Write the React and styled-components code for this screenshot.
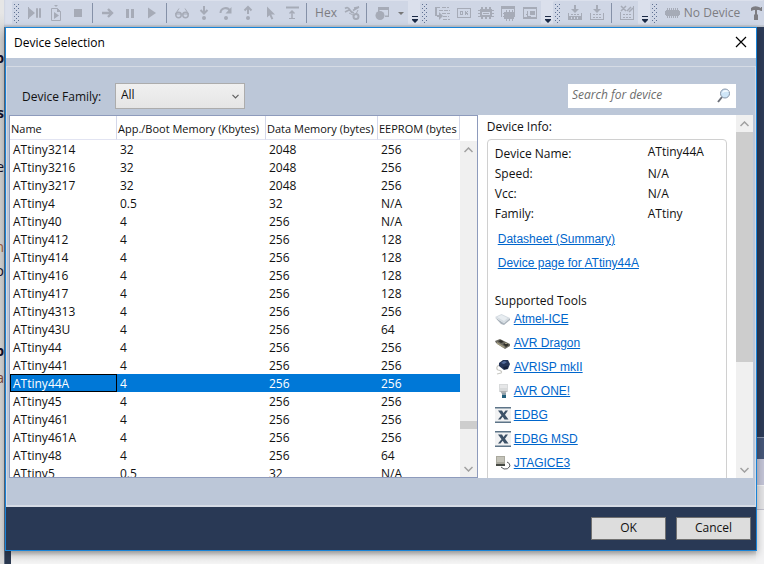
import React, { useState } from "react";
import styled, { createGlobalStyle, css } from "styled-components";

const UI = '"Open Sans", "Noto Sans", sans-serif';
const ARIAL = '"Liberation Sans", Arial, sans-serif';

const Global = createGlobalStyle`
  *, *::before, *::after { box-sizing: border-box; }
  body { margin: 0; font: 12px/18px ${UI}; color: #111; overflow: hidden; }
  button, input, select { font: inherit; color: inherit; margin: 0; border-radius: 0; }
  svg { display: block; flex: none; }
`;

/* ---------- main window behind the dialog ---------- */

const Window = styled.div`
  position: relative;
  display: grid;
  grid-template-columns: 4px 7px 1fr 8px;
  grid-template-rows: 27px 1fr;
  height: 100vh;
  min-height: 400px;
  background: #f2f2f3;
`;
const Source = styled.div`
  grid-row: 1 / 3;
  overflow: hidden;
  background: linear-gradient(#e6e6e6 0 13px, #cfcfcf 40px, #d9d9d9);
  display: flex;
  flex-direction: column;
  align-items: flex-end;
  padding-top: 46px;
  font-size: 14px;
`;
const SourceText = styled.span`
  height: ${(p) => p.$h}px;
  line-height: 24px;
  color: ${(p) => p.$c || "#10102c"};
  font-weight: ${(p) => (p.$bold ? 700 : 400)};
`;
const Frame = styled.div`
  background: #2a3850;
  border-left: 1px solid #5f6c80;
`;
const Page = styled.div`
  background: linear-gradient(to top, #f4f4f4, #efefef 8px, #c8c8c8 14px);
`;
const SideDock = styled.div`
  display: flex;
  flex-direction: column;
  background: #f1f1f2;
`;
const DockBand = styled.div`
  height: ${(p) => p.$h}px;
  flex: ${(p) => (p.$grow ? "1 0 0" : "none")};
  background: ${(p) => p.$bg};
  border-top: 1px solid ${(p) => p.$line || p.$bg};
`;

/* ---------- toolbar ---------- */

const Toolbar = styled.div`
  grid-column: 2 / 5;
  display: flex;
  align-items: stretch;
  padding: 1px 0 2px 8px;
  background: #dbe0ec;
  box-shadow: inset 0 -2px 2px #b9bfca;
  overflow: hidden;
  color: #a6abb7;
`;
const Tray = styled.div`
  display: flex;
  flex: none;
  align-items: center;
  background: #cfd6e5;
  border-radius: 2px 0 0 2px;
`;
const Grip = styled.span`
  width: 6px;
  height: 19px;
  margin: 0 3px 0 2px;
  background-image: conic-gradient(at 1px 1px, transparent 75%, #5f7193 0),
    conic-gradient(at 1px 1px, transparent 75%, #5f7193 0);
  background-size: 4px 4px;
  background-position: 0 0, 2px 2px;
`;
const ToolButton = styled.button`
  width: 22px;
  height: 22px;
  padding: 0;
  border: 0;
  background: none;
  display: flex;
  align-items: center;
  justify-content: center;
`;
const TextButton = styled(ToolButton)`
  width: ${(p) => p.$w}px;
  color: #7d7d82;
  white-space: nowrap;
`;
const Divider = styled.span`
  width: 1px;
  height: 20px;
  margin: 0 4px 0 3px;
  background: #8591a8;
`;
const Overflow = styled.button`
  width: 12px;
  padding: 14px 0 0;
  border: 0;
  background: none;
  flex: none;
  display: flex;
  justify-content: center;
`;

const Ico = ({ children, size = 16 }) => (
  <svg width={size} height={size} viewBox="0 0 16 16" fill="currentColor" shapeRendering="crispEdges" aria-hidden="true">
    {children}
  </svg>
);
const line = { fill: "none", stroke: "currentColor", strokeWidth: 2 };
const thin = { fill: "none", stroke: "currentColor", strokeWidth: 1 };
const soft = { shapeRendering: "auto" };

const icons = {
  stepBreak: <g {...soft}><path d="M2 2h1v12H2zM3 3l6 5-6 5z" /><path d="M10.500 3.500h1v9h-1zM13.500 3.500h1v9h-1z" {...thin} /></g>,
  restart: <g {...soft}><path d="M5 -1h6l-3 3z" /><path d="M3.500 3.500h6l3 3v9h-9z" {...thin} /><path d="M9 3v4h4M6 7l5 3.500-5 3.500z" /></g>,
  stop: <path d="M4 4h8v8H4z" />,
  next: <g {...soft}><path d="M2 8h9M8 4l4 4-4 4" {...line} strokeWidth="2.400" /></g>,
  pause: <path d="M4 4h3v9H4zM9 4h3v9H9z" />,
  play: <path d="M4 2.500 12 8l-8 5.500z" {...soft} />,
  watch: <g {...soft}><circle cx="4.500" cy="10" r="2.700" {...thin} strokeWidth="1.500" /><circle cx="11.500" cy="10" r="2.700" {...thin} strokeWidth="1.500" /><path d="M1.500 9 5 3.500M14.500 9 11 3.500M1 9h14" {...thin} /></g>,
  into: <g {...soft}><path d="M8 1v7M4.500 5 8 8.500 11.500 5" {...line} /><circle cx="8" cy="13" r="2" /></g>,
  over: <g {...soft}><path d="M2.500 8A5 5 0 0 1 12 6" {...line} /><path d="M13.500 2v6.500H7.500z" /><circle cx="8" cy="13" r="2" /></g>,
  out: <g {...soft}><path d="M8 9V3M4.500 5.500 8 2l3.500 3.500" {...line} /><circle cx="8" cy="13" r="2" /></g>,
  cursor: <path d="M5 1.500v11l2.500-2.300 2 4.300 1.800-.8-2-4.200H13z" {...soft} />,
  runTo: <g {...soft}><path d="M2 1.500h13v2H2zM5 13h6v1H5z" /><path d="M8 13V6M5.500 8.500 8 6l2.500 2.500" {...thin} strokeWidth="1.500" /></g>,
  threads: <g {...soft}><path d="M1 3.500q3-2 4.500 1T10 8M1 7l4-2M9 5.500 15 2M10 3l5-1" {...line} strokeWidth="1.700" /><circle cx="12" cy="11.500" r="2.500" {...line} /><path d="M5 8l4 2M12 9l2-4" {...thin} /></g>,
  windows: <g {...soft}><path d="M4 2h11v10h-4v-1.500h3V5H5.500v2H4z" /><circle cx="6" cy="10.500" r="4.500" /></g>,
  disasm: <><path d="M1 2h5v1H1zM1 2h2v9H1zM3 10h3v2H3z" /><path d="M5 7l4 4-4 4z" {...soft} /><path d="M8 2.500h7M5 5.500h11M8 8.500h8M9 11.500h6M9 14.500h7" {...thin} strokeDasharray="4 1" /></>,
  registers: <><path d="M1.500 3.500h13v9h-13z" {...thin} /><path d="M4.500 6.500h2v3h-2zM9 6l3 4M12 6 9 10" {...thin} /></>,
  chip: <><path d="M2 4h12v8H2z" /><path d="M0 5h16v1H0zM0 8h16v1H0zM0 11h16v1H0zM3 2h2v12H3zM7 2h2v12H7zM11 2h2v12h-2z" /><path d="M4 7h8v3H4z" fill="#cfd6e5" /><path d="M5 8h6v1H5z" /></>,
  chipWindow: <><path d="M1.500 11.500v-10h13v10" {...thin} /><path d="M1 1h14v3H1zM4 7h10v7H4z" /><path d="M3 8h12v1H3zM3 11h12v1H3zM6 5h1v11H6zM9 5h1v11H9zM12 5h1v11h-1z" /></>,
  tracker: <><path d="M1.500 2.500h13v11h-13z" {...thin} /><path d="M1 2h14v2H1zM8 6h5v4H8zM1 12h14v2H1z" /><path d="M5 6v5h4M4 9l3 3" {...thin} /></>,
  build: <><path d="M1.500 8v6.500h13V8" {...thin} /><path d="M7 0h2v5H7zM1 11h14v4H1z" /><path d="M4 4h8l-4 4z" {...soft} /><path d="M4 9h2v1H4zM7 9h2v1H7zM10 9h2v1h-2z" /><path d="M4 12h1v2H4zM7 12h1v2H7zM10 12h1v2h-1z" fill="#cfd6e5" /></>,
  buildOne: <><path d="M1.500 8v6.500h13V8" {...thin} /><path d="M7 0h2v5H7z" /><path d="M4 4h8l-4 4z" {...soft} /><path d="M4 9h2v1H4zM7 9h2v1H7zM10 9h2v1h-2zM4 12h2v1H4zM7 12h2v1H7zM10 12h2v1h-2z" /></>,
  buildCancel: <><path d="M1.500 7v7.500h13V1" {...thin} /><path d="M2 1l5 5M7 1 2 6M8 6l4-4M10 7l4-4" {...thin} strokeWidth="1.500" {...soft} /><path d="M4 9h2v1H4zM7 9h2v1H7zM10 9h2v1h-2zM4 12h2v1H4zM7 12h2v1H7zM10 12h2v1h-2z" /></>,
  device: <><path d="M2 5h13v6H2z" /><path d="M1 6h15v4H1zM3 3h1v10H3zM5 3h1v10H5zM7 3h1v10H7zM9 3h1v10H9zM11 3h1v10h-1zM13 3h1v10h-1z" /></>,
  hammer: <g {...soft}><path d="M3 6V3q3-3 8-1l2 1V2h1v4h-1l-2-1H6z" /><path d="M7 5h2v4l1 1v5H6v-5l1-1z" /></g>,
};

const Tool = ({ name, label }) => (
  <ToolButton aria-label={label || name}><Ico>{icons[name]}</Ico></ToolButton>
);
const More = () => (
  <Overflow aria-label="Toolbar options">
    <svg width="7" height="8" viewBox="0 0 7 8" fill="#1b2945"><path d="M1 1h6v1H1zM1 4h6v1L4 8 1 5z" /></svg>
  </Overflow>
);

/* ---------- dialog ---------- */

const Dialog = styled.section`
  position: absolute;
  inset: 27px 7px 13px 5px;
  display: flex;
  flex-direction: column;
  border: 1px solid #1883d7;
  background: #bcc7d8;
  box-shadow: 0 3px 8px rgba(0, 0, 0, 0.3);
`;
const TitleBar = styled.header`
  display: flex;
  align-items: center;
  justify-content: space-between;
  height: 30px;
  flex: none;
  padding: 0 8px;
  background: #fff;
`;
const Title = styled.h1`
  margin: 0;
  font-size: 12px;
  font-weight: 400;
  color: #000;
`;
const CloseButton = styled.button`
  padding: 0 1px 2px;
  border: 0;
  background: none;
`;
const Content = styled.div`
  flex: 1;
  min-height: 0;
  display: flex;
  flex-direction: column;
  margin-top: 8px;
  padding: 16px 2px 27px;
  border: 1px solid #d5dbe5;
  border-bottom-width: 2px;
`;
const FilterBar = styled.div`
  display: flex;
  justify-content: space-between;
  padding: 0 17px 6px 13px;
`;
const Field = styled.div`
  display: flex;
  align-items: center;
`;
const FamilyLabel = styled.label`
  width: 93px;
  padding-top: 2px;
`;
const SelectBox = styled.div`
  display: grid;
  align-items: center;
  width: 130px;
  height: 26px;
  > * { grid-area: 1 / 1; }
  svg { justify-self: end; margin-right: 6px; pointer-events: none; }
`;
const Select = styled.select`
  appearance: none;
  width: 100%;
  height: 100%;
  padding: 0 20px 2px 5px;
  border: 1px solid #acacac;
  background: linear-gradient(#f0f0f0, #e5e5e5);
`;
const SearchBox = styled.div`
  display: flex;
  align-items: center;
  width: 168px;
  height: 24px;
  margin-top: 1px;
  padding: 0 5px 0 4px;
  background: #fff;
`;
const SearchInput = styled.input`
  flex: 1;
  min-width: 0;
  padding: 0 0 2px;
  border: 0;
  outline: 0;
  background: none;
  font-style: italic;
  &::placeholder { color: #6d6d6d; opacity: 1; }
`;
const Panes = styled.div`
  flex: 1;
  min-height: 0;
  display: flex;
`;
const DeviceList = styled.div`
  flex: 468 1 0;
  min-width: 0;
  display: flex;
  border: 1px solid #8e9bbc;
  background: #fff;
`;
const TableClip = styled.div`
  flex: 1;
  min-width: 0;
  overflow: hidden;
`;
const Table = styled.table`
  width: 100%;
  table-layout: fixed;
  border-collapse: separate;
  border-spacing: 0;
`;
const Col = styled.col`
  width: ${(p) => p.$w};
`;
const HeadCell = styled.th`
  height: 24px;
  padding: 2px 0 0 1px;
  border-right: 1px solid #d4d8ea;
  border-bottom: 1px solid #e2e4f2;
  font-size: 11px;
  line-height: 20px;
  font-weight: 400;
  text-align: left;
  white-space: nowrap;
  overflow: hidden;
`;
const Cell = styled.td`
  height: 18px;
  padding: 2px 0 0 3px;
  line-height: 16px;
  white-space: nowrap;
  overflow: hidden;
`;
const Row = styled.tr`
  ${(p) => p.$selected && css`
    background: #0078d7;
    color: #fff;
    ${Cell}:first-child { outline: 1px solid #000; outline-offset: -1px; }
  `}
`;
const ScrollTrack = styled.div`
  width: 17px;
  flex: none;
  display: flex;
  flex-direction: column;
  margin-top: ${(p) => p.$top || 0}px;
  background: #f0f0f0;
`;
const ScrollButton = styled.button`
  height: 17px;
  flex: none;
  display: flex;
  align-items: center;
  justify-content: center;
  padding: 0;
  border: 0;
  background: none;
  color: #a0a0a0;
`;
const Thumb = styled.div`
  height: ${(p) => p.$size};
  margin: ${(p) => p.$before} 0 auto;
  background: #cdcdcd;
`;
const InfoPane = styled.div`
  flex: 276 1 0;
  min-width: 0;
  display: flex;
  background: #fff;
`;
const InfoBody = styled.div`
  flex: 1;
  min-width: 0;
  padding: 3px 9px 0 9px;
  overflow: hidden;
`;
const InfoTitle = styled.h2`
  margin: 0 0 3px;
  font-size: 12px;
  line-height: 18px;
  font-weight: 400;
`;
const InfoGroup = styled.div`
  height: 600px;
  padding: 4px 7px 0;
  border: 1px solid #d0d0d0;
  border-radius: 4px;
`;
const Facts = styled.dl`
  display: grid;
  grid-template-columns: 153px 1fr;
  grid-auto-rows: 20px;
  align-items: center;
  margin: 0;
`;
const Term = styled.dt``;
const Value = styled.dd`
  margin: 0;
  padding-bottom: ${(p) => (p.$raised ? 4 : 0)}px;
`;
const Link = styled.a`
  font: 12px/14px ${ARIAL};
  color: #0066cc;
  text-decoration: underline;
`;
const Docs = styled.div`
  display: flex;
  flex-direction: column;
  align-items: flex-start;
  gap: 10px;
  padding: 8px 0 0 3px;
`;
const ToolsTitle = styled.h3`
  margin: 23px 0 0;
  font-size: 12px;
  line-height: 16px;
  font-weight: 400;
`;
const Tools = styled.ul`
  margin: 0;
  padding: 0;
  list-style: none;
`;
const ToolItem = styled.li`
  display: flex;
  align-items: center;
  gap: 3px;
  height: 24px;
  padding-bottom: 4px;
`;
const Footer = styled.footer`
  display: flex;
  justify-content: flex-end;
  gap: 10px;
  height: 43px;
  flex: none;
  padding: 10px 5px;
  background: #293955;
`;
const Button = styled.button`
  width: 75px;
  height: 23px;
  padding: 0 0 1px;
  border: 1px solid #707070;
  background: #ddd;
`;

const Chevron = ({ up, color = "#a0a0a0" }) => (
  <svg width="9" height="6" viewBox="0 0 9 6" fill="none" stroke={color} strokeWidth="1.500">
    <path d={up ? "M.5 5 4.500 1l4 4" : "M.5 1l4 4 4-4"} />
  </svg>
);
const Scrollbar = ({ top, before, size }) => (
  <ScrollTrack $top={top}>
    <ScrollButton aria-label="Scroll up"><Chevron up /></ScrollButton>
    <Thumb $before={before} $size={size} />
    <ScrollButton aria-label="Scroll down"><Chevron /></ScrollButton>
  </ScrollTrack>
);

const edbg = (
  <><path fill="#f1f2f3" d="M0 1h16v14H0z" /><path fill="#5d7488" d="M0 0h16v1.500H0zM0 14.500h16V16H0z" />
    <path fill="#3d5268" d="M3 3.500h4l1.500 2.500 2-2.500h2.500L10 7.700l3.500 4.800H9.500L7.700 9.800l-2.200 2.700H3l3.500-4.300z" /></>
);
const toolArt = {
  ice: <><path fill="#a9b2bb" d="M0 6.500 6 13l3 1 6-5v-2l-6 5z" /><path fill="#d5dce2" d="M0 6 6.500 3 15 7 9 12.500z" /><path fill="#e8edf1" d="M2 6 6.500 4l6 3L9 10z" /></>,
  dragon: <><path fill="#6c6a61" d="M0 6 5 4l10 5v2l-5 3L1 8z" /><path fill="#302f2a" d="M3 6l3-1 3 2-3 1zM8 9l3-1 3 2-3 2z" /><path fill="#a19b80" d="M2 7l8 5-1 1-7-4zM10 8l2 0v1h-2z" /></>,
  isp: <><path d="M4 6Q0 9 3 11q5 1 3 3L2 15" fill="none" stroke="#c9c9c4" strokeWidth="1.200" /><path fill="#243458" d="M4 4 8 1h5l2 4-2 5-4 1-5-4z" /><path fill="#526c9d" d="M6 4l3-2 3 1-3 2z" /><path fill="#15203b" d="M8 8l5-1-1 3H9z" /></>,
  one: <><path fill="#d8dadb" d="M4 1h9v8H4z" /><path fill="#e6e7e8" d="M5 2h7v3H5z" /><path fill="#aeb2b4" d="M5 8h7l-2 3H7z" /><path fill="#8fa0aa" d="M7 10h4v2H7z" /><path fill="#23607c" d="M7 12h4v3H7z" /></>,
  edbg,
  jtag: <><path fill="#aaa99e" d="M1 1h9v8H1z" /><path fill="#c4c3b9" d="M2 2h7v5H2z" /><path fill="#454943" d="M1 9h9v2H1z" /><path d="M12 7q3 1 3 4-2 4-6 3l-3-2" fill="none" stroke="#55585c" strokeWidth="1" /></>,
};

const devices = [
  ["ATtiny3214", "32", "2048", "256"],
  ["ATtiny3216", "32", "2048", "256"],
  ["ATtiny3217", "32", "2048", "256"],
  ["ATtiny4", "0.5", "32", "N/A"],
  ["ATtiny40", "4", "256", "N/A"],
  ["ATtiny412", "4", "256", "128"],
  ["ATtiny414", "4", "256", "128"],
  ["ATtiny416", "4", "256", "128"],
  ["ATtiny417", "4", "256", "128"],
  ["ATtiny4313", "4", "256", "256"],
  ["ATtiny43U", "4", "256", "64"],
  ["ATtiny44", "4", "256", "256"],
  ["ATtiny441", "4", "256", "256"],
  ["ATtiny44A", "4", "256", "256"],
  ["ATtiny45", "4", "256", "256"],
  ["ATtiny461", "4", "256", "256"],
  ["ATtiny461A", "4", "256", "256"],
  ["ATtiny48", "4", "256", "64"],
  ["ATtiny5", "0.5", "32", "N/A"],
];
const columns = [
  ["Name", "107px"],
  ["App./Boot Memory (Kbytes)", "149px"],
  ["Data Memory (bytes)", "112px"],
  ["EEPROM (bytes", "auto"],
];
const tools = [
  ["Atmel-ICE", "ice"],
  ["AVR Dragon", "dragon"],
  ["AVRISP mkII", "isp"],
  ["AVR ONE!", "one"],
  ["EDBG", "edbg"],
  ["EDBG MSD", "edbg"],
  ["JTAGICE3", "jtag"],
];

function MainToolbar() {
  return (
    <Toolbar role="toolbar">
      <Tray>
        <Grip />
        <Tool name="stepBreak" /><Tool name="restart" /><Tool name="stop" />
        <Divider />
        <Tool name="next" /><Tool name="pause" /><Tool name="play" />
        <Divider />
        <Tool name="watch" /><Tool name="into" /><Tool name="over" /><Tool name="out" /><Tool name="cursor" /><Tool name="runTo" />
        <Divider />
        <TextButton $w={30}>Hex</TextButton>
        <Tool name="threads" />
        <Divider />
        <Tool name="windows" />
        <TextButton $w={15} aria-label="Windows menu">
          <svg width="6" height="3" viewBox="0 0 6 3" fill="#777"><path d="M0 0h6L3 3z" /></svg>
        </TextButton>
      </Tray>
      <More />
      <Tray>
        <Grip />
        <Tool name="disasm" /><Tool name="registers" /><Tool name="chip" /><Tool name="chipWindow" /><Tool name="tracker" />
      </Tray>
      <More />
      <Tray>
        <Grip />
        <Tool name="build" /><Tool name="buildOne" />
        <Divider />
        <Tool name="buildCancel" />
      </Tray>
      <More />
      <Tray>
        <Grip />
        <Tool name="device" />
        <TextButton $w={58}>No Device</TextButton>
        <TextButton $w={30} aria-label="Device tool"><Ico>{icons.hammer}</Ico></TextButton>
      </Tray>
    </Toolbar>
  );
}

export default function App() {
  const [selected, setSelected] = useState("ATtiny44A");
  return (
    <Window>
      <Global />
      <Source>
        <SourceText $h={55} $bold>b</SourceText>
        <SourceText $h={54} $bold>s</SourceText>
        <SourceText $h={80}>e</SourceText>
        <SourceText $h={24} $c="#a06040">n</SourceText>
        <SourceText $h={80}>o</SourceText>
        <SourceText $h={27} $bold>b</SourceText>
        <SourceText $h={24} $c="#804838">a</SourceText>
      </Source>
      <MainToolbar />
      <Frame />
      <Page />
      <SideDock>
        <DockBand $grow $bg="#2d3b58" />
        <DockBand $h={22} $bg="#465678" $line="#8590a8" />
        <DockBand $h={26} $bg="#c3c4d6" />
        <DockBand $h={24} $bg="#e4e4e6" $line="#f2f2f4" />
        <DockBand $h={55} $bg="#f3f3f4" $line="#c0c0cc" />
      </SideDock>

      <Dialog role="dialog" aria-labelledby="dialog-title">
        <TitleBar>
          <Title id="dialog-title">Device Selection</Title>
          <CloseButton aria-label="Close">
            <svg width="12" height="12" viewBox="0 0 12 12" stroke="#000" strokeWidth="1.200"><path d="M1 1l10 10M11 1 1 11" /></svg>
          </CloseButton>
        </TitleBar>
        <Content>
          <FilterBar>
            <Field>
              <FamilyLabel htmlFor="family">Device Family:</FamilyLabel>
              <SelectBox>
                <Select id="family" defaultValue="All"><option>All</option></Select>
                <svg width="7" height="5" viewBox="0 0 7 5" fill="none" stroke="#606060" strokeWidth="1.200"><path d="M.5.8l3 3 3-3" /></svg>
              </SelectBox>
            </Field>
            <SearchBox>
              <SearchInput type="text" aria-label="Search for device" placeholder="Search for device" />
              <svg width="14" height="16" viewBox="0 0 14 16">
                <path d="M5 9 1 14" stroke="#6b6f78" strokeWidth="2" />
                <circle cx="8" cy="5.500" r="4.500" fill="#cfe6f8" stroke="#8795a8" />
                <path d="M5 5q1-3 4-3 2 0 3 2-3-1-7 1" fill="#f3faff" />
              </svg>
            </SearchBox>
          </FilterBar>
          <Panes>
            <DeviceList>
              <TableClip>
                <Table>
                  <colgroup>{columns.map(([name, w]) => <Col key={name} $w={w} />)}</colgroup>
                  <thead>
                    <tr>{columns.map(([name]) => <HeadCell key={name} scope="col">{name}</HeadCell>)}</tr>
                  </thead>
                  <tbody>
                    {devices.map((d) => (
                      <Row key={d[0]} $selected={d[0] === selected} onClick={() => setSelected(d[0])}>
                        {d.map((v, i) => <Cell key={i}>{v}</Cell>)}
                      </Row>
                    ))}
                  </tbody>
                </Table>
              </TableClip>
              <Scrollbar top={25} before="263px" size="8px" />
            </DeviceList>
            <InfoPane>
              <InfoBody>
                <InfoTitle>Device Info:</InfoTitle>
                <InfoGroup>
                  <Facts>
                    <Term>Device Name:</Term><Value $raised>{selected}</Value>
                    <Term>Speed:</Term><Value>N/A</Value>
                    <Term>Vcc:</Term><Value>N/A</Value>
                    <Term>Family:</Term><Value>ATtiny</Value>
                  </Facts>
                  <Docs>
                    <Link href="#datasheet">Datasheet (Summary)</Link>
                    <Link href="#device">Device page for {selected}</Link>
                  </Docs>
                  <ToolsTitle>Supported Tools</ToolsTitle>
                  <Tools>
                    {tools.map(([name, art]) => (
                      <ToolItem key={name}>
                        <svg width="16" height="16" viewBox="0 0 16 16" aria-hidden="true">{toolArt[art]}</svg>
                        <Link href={`#${art}`}>{name}</Link>
                      </ToolItem>
                    ))}
                  </Tools>
                </InfoGroup>
              </InfoBody>
              <Scrollbar before="0" size="230px" />
            </InfoPane>
          </Panes>
        </Content>
        <Footer>
          <Button>OK</Button>
          <Button>Cancel</Button>
        </Footer>
      </Dialog>
    </Window>
  );
}
